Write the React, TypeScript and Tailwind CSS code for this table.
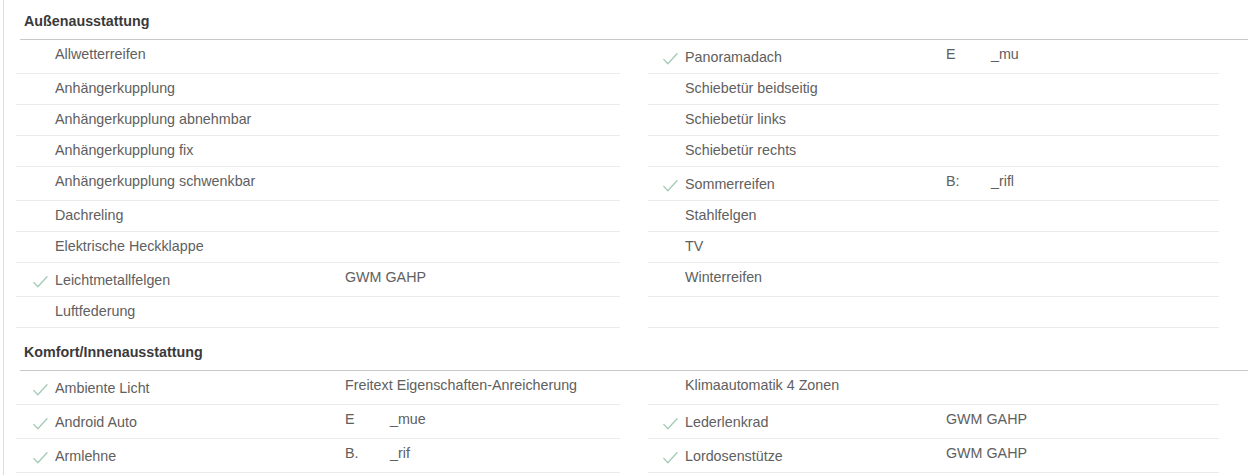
import React from "react";

type Cell = { label?: string; checked?: boolean; value?: React.ReactNode };
type Row = [Cell, Cell];

const Check = () => (
  <svg width="15" height="12" viewBox="0 0 15 12" className="shrink-0 mt-[6px]">
    <path d="M0.8 6.4 L4.8 10.8 L14 0.8" fill="none" stroke="#a3cab6" strokeWidth="1.3" strokeLinecap="round" strokeLinejoin="round" />
  </svg>
);

const Redacted = ({ a, b }: { a: string; b: string }) => (
  <span className="flex">
    <span className="w-[45px]">{a}</span>
    <span>{b}</span>
  </span>
);

const section1: Row[] = [
  [{ label: "Allwetterreifen" }, { label: "Panoramadach", checked: true, value: <Redacted a="E" b="_mu" /> }],
  [{ label: "Anhängerkupplung" }, { label: "Schiebetür beidseitig" }],
  [{ label: "Anhängerkupplung abnehmbar" }, { label: "Schiebetür links" }],
  [{ label: "Anhängerkupplung fix" }, { label: "Schiebetür rechts" }],
  [{ label: "Anhängerkupplung schwenkbar" }, { label: "Sommerreifen", checked: true, value: <Redacted a="B:" b="_rifl" /> }],
  [{ label: "Dachreling" }, { label: "Stahlfelgen" }],
  [{ label: "Elektrische Heckklappe" }, { label: "TV" }],
  [{ label: "Leichtmetallfelgen", checked: true, value: "GWM GAHP" }, { label: "Winterreifen" }],
  [{ label: "Luftfederung" }, {}],
];

const section2: Row[] = [
  [{ label: "Ambiente Licht", checked: true, value: "Freitext Eigenschaften-Anreicherung" }, { label: "Klimaautomatik 4 Zonen" }],
  [{ label: "Android Auto", checked: true, value: <Redacted a="E" b="_mue" /> }, { label: "Lederlenkrad", checked: true, value: "GWM GAHP" }],
  [{ label: "Armlehne", checked: true, value: <Redacted a="B." b="_rif" /> }, { label: "Lordosenstütze", checked: true, value: "GWM GAHP" }],
];

const LabelCell = ({ cell, side }: { cell: Cell; side: "l" | "r" }) => {
  const base = "border-b border-[#ebebeb] leading-[20px] flex items-start";
  if (cell.checked) {
    return (
      <div className={`${base} pt-[7px] pb-[6px] ${side === "l" ? "pl-[17px]" : "pl-[15px]"}`}>
        <Check />
        <span className="ml-[7px]">{cell.label}</span>
      </div>
    );
  }
  return (
    <div className={`${base} pt-[4px] pb-[6px] ${side === "l" ? "pl-[39px]" : "pl-[37px]"}`}>
      <span>{cell.label ?? ""}</span>
    </div>
  );
};

const ValueCell = ({ cell }: { cell: Cell }) => (
  <div className="border-b border-[#ebebeb] leading-[20px] pt-[4px] pb-[6px]">{cell.value ?? ""}</div>
);

const Section = ({ title, rows, first }: { title: string; rows: Row[]; first?: boolean }) => (
  <div>
    <div
      className={`${first ? "" : "mt-[3px]"} pt-[11px] pb-[8px] pl-[4px] leading-[20px] font-bold text-[#3a3a3a] border-b border-[#c9c9c9]`}
    >
      {title}
    </div>
    <div className="ml-[-4px] grid grid-cols-[329px_275px_28px_298px_273px]">
      {rows.map((r, i) => (
        <React.Fragment key={i}>
          <LabelCell cell={r[0]} side="l" />
          <ValueCell cell={r[0]} />
          <div />
          <LabelCell cell={r[1]} side="r" />
          <ValueCell cell={r[1]} />
        </React.Fragment>
      ))}
    </div>
  </div>
);

export default function App() {
  return (
    <div className="w-[1254px] h-[475px] bg-white overflow-hidden text-[14.3px] text-[#606060] font-['Liberation_Sans',Arial,sans-serif]">
      <div className="ml-[3px] h-full border-l border-[#dddddd] pl-[16px] pr-[6px]">
        <Section title="Außenausstattung" rows={section1} first />
        <Section title="Komfort/Innenausstattung" rows={section2} />
      </div>
    </div>
  );
}
